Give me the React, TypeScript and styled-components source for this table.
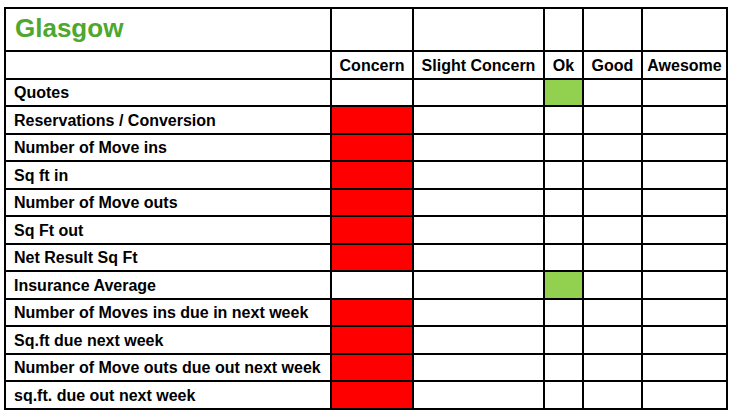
import React from "react";
import styled, { createGlobalStyle } from "styled-components";

const GlobalStyle = createGlobalStyle`
  html, body {
    margin: 0;
    padding: 0;
    background: #ffffff;
  }
  body {
    font-family: "Liberation Sans", Arial, sans-serif;
  }
`;

// rating columns, left to right
const ratings = ["Concern", "Slight Concern", "Ok", "Good", "Awesome"];
const widths = [326, 82, 131, 39, 59, 85];

// which rating each measure currently sits in (index into ratings)
const rows = [
  { label: "Quotes", rating: 2 },
  { label: "Reservations / Conversion", rating: 0 },
  { label: "Number of Move ins", rating: 0 },
  { label: "Sq ft in", rating: 0 },
  { label: "Number of Move outs", rating: 0 },
  { label: "Sq Ft out", rating: 0 },
  { label: "Net Result Sq Ft", rating: 0 },
  { label: "Insurance Average", rating: 2 },
  { label: "Number of Moves ins due in next week", rating: 0 },
  { label: "Sq.ft due next week", rating: 0 },
  { label: "Number of Move outs due out next week", rating: 0 },
  { label: "sq.ft. due out next week", rating: 0 },
];

const fills = ["#ff0000", "#ffffff", "#92d050", "#ffffff", "#ffffff"];

const Page = styled.div`
  padding: 7px 0 0 4px;
`;

const Sheet = styled.table`
  border-collapse: collapse;
  table-layout: fixed;
  width: 722px;
  color: #000;
`;

const Row = styled.tr<{ $tall?: boolean }>`
  height: ${(p) => (p.$tall ? "43px" : "27.5px")};
`;

const Cell = styled.td<{ $fill?: string }>`
  border: 2px solid #000;
  padding: 0;
  background: ${(p) => p.$fill || "#fff"};
`;

const Title = styled.td`
  border: 2px solid #000;
  padding: 0 0 3px 9px;
  font-size: 26px;
  font-weight: bold;
  color: #4ea72e;
  vertical-align: middle;
`;

const Heading = styled.td`
  border: 2px solid #000;
  padding: 2px 0 0;
  font-size: 16px;
  font-weight: bold;
  text-align: center;
  white-space: nowrap;
`;

const Label = styled.td`
  border: 2px solid #000;
  padding: 2px 0 0 8px;
  font-size: 16px;
  font-weight: bold;
  white-space: nowrap;
`;

const App = () => {
  return (
    <Page>
      <GlobalStyle />
      <Sheet>
        <colgroup>
          {widths.map((w, i) => (
            <col key={i} style={{ width: w }} />
          ))}
        </colgroup>
        <tbody>
          <Row $tall>
            <Title>Glasgow</Title>
            {ratings.map((r) => (
              <Cell key={r} />
            ))}
          </Row>
          <Row>
            <Cell />
            {ratings.map((r) => (
              <Heading key={r}>{r}</Heading>
            ))}
          </Row>
          {rows.map((row) => (
            <Row key={row.label}>
              <Label>{row.label}</Label>
              {ratings.map((r, i) => (
                <Cell key={r} $fill={i === row.rating ? fills[i] : undefined} />
              ))}
            </Row>
          ))}
        </tbody>
      </Sheet>
    </Page>
  );
};

export default App;
